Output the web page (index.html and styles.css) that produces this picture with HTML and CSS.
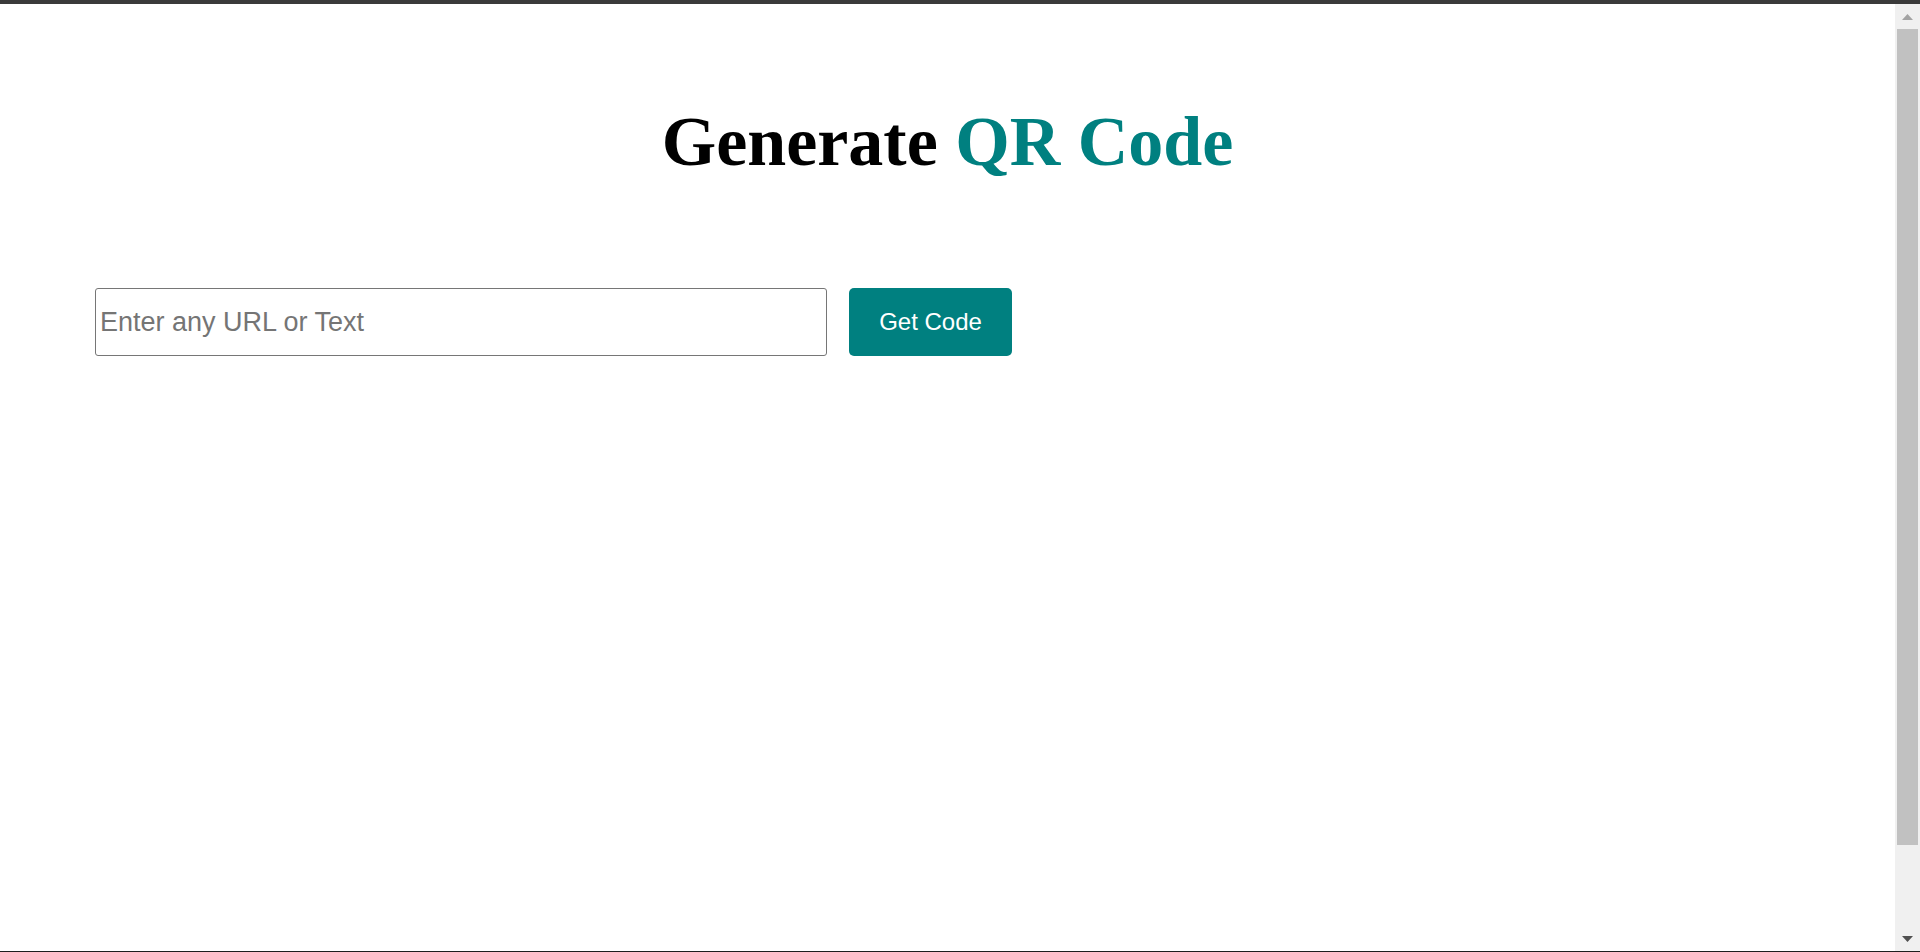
FILE: index.html
```html
<!DOCTYPE html>
<html lang="en">
<head>
<meta charset="utf-8">
<title>Generate QR Code</title>
<link rel="stylesheet" href="styles.css">
</head>
<body>
<div class="frame-top"></div>
<div class="window">
  <main class="content">
    <h1 class="title">Generate <span class="accent">QR Code</span></h1>
    <div class="form-row">
      <input class="url-input" type="text" placeholder="Enter any URL or Text">
      <button class="get-btn" type="button">Get Code</button>
    </div>
  </main>
  <div class="scrollbar">
    <div class="sb-btn">
      <svg width="11" height="6" viewBox="0 0 11 6"><polygon points="5.5,0 11,6 0,6" fill="#a3a3a3"/></svg>
    </div>
    <div class="sb-thumb"></div>
    <div class="sb-track"></div>
    <div class="sb-btn">
      <svg width="11" height="6" viewBox="0 0 11 6"><polygon points="0,0 11,0 5.5,6" fill="#505050"/></svg>
    </div>
  </div>
</div>
<div class="frame-bottom"></div>
</body>
</html>
```
FILE: styles.css
```css
html, body {
  margin: 0;
  padding: 0;
  height: 100%;
  overflow: hidden;
  background: #ffffff;
}

body {
  display: flex;
  flex-direction: column;
  font-family: "Liberation Sans", Arial, sans-serif;
}

.frame-top {
  height: 4px;
  flex: 0 0 4px;
  background: #3a3a3a;
}

.frame-bottom {
  height: 1px;
  flex: 0 0 1px;
  background: #1e1e1e;
}

.window {
  flex: 1 1 auto;
  display: flex;
  min-height: 0;
}

.content {
  flex: 1 1 auto;
  min-width: 0;
}

.title {
  margin: 98px 0 0 0;
  font-family: "Liberation Serif", "Times New Roman", serif;
  font-weight: bold;
  font-size: 70px;
  line-height: 80px;
  text-align: center;
  color: #000000;
}

.accent {
  color: #008080;
}

.form-row {
  display: flex;
  align-items: stretch;
  gap: 22px;
  margin-top: 106px;
  padding-left: 95px;
}

.url-input {
  box-sizing: border-box;
  width: 732px;
  height: 68px;
  margin: 0;
  padding: 0 4px;
  border: 1px solid #767676;
  border-radius: 3px;
  font-family: "Liberation Sans", Arial, sans-serif;
  font-size: 27px;
  color: #000000;
  background: #ffffff;
  outline: none;
}

.url-input::placeholder {
  color: #757575;
}

.get-btn {
  box-sizing: border-box;
  width: 163px;
  height: 68px;
  margin: 0;
  padding: 0;
  border: none;
  border-radius: 5px;
  background: #008080;
  color: #ffffff;
  font-family: "Liberation Sans", Arial, sans-serif;
  font-size: 24px;
  cursor: pointer;
}

.scrollbar {
  flex: 0 0 25px;
  width: 25px;
  display: flex;
  flex-direction: column;
  background: #f0f0f0;
}

.sb-btn {
  flex: 0 0 25px;
  height: 25px;
  display: flex;
  justify-content: center;
  align-items: flex-start;
  padding-top: 10px;
  box-sizing: border-box;
}

.sb-btn svg {
  display: block;
}

.sb-thumb {
  flex: 0 0 816px;
  margin: 0 2px 0 2px;
  background: #c1c1c1;
}

.sb-track {
  flex: 1 1 auto;
}
```
